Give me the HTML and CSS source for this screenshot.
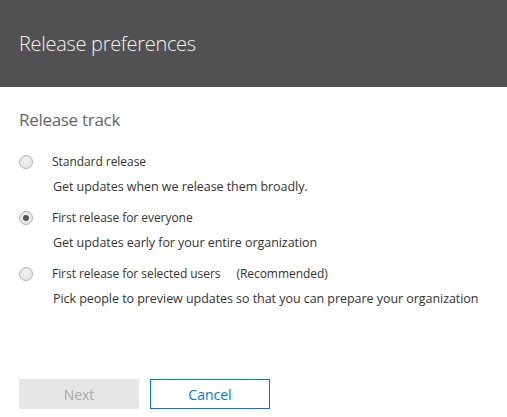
FILE: index.html
```html
<!DOCTYPE html>
<html lang="en">
<head>
<meta charset="utf-8">
<title>Release preferences</title>
<link rel="stylesheet" href="styles.css">
</head>
<body>
<div class="panel">
  <header class="header">
    <h1 class="title">Release preferences</h1>
  </header>
  <main class="content">
    <h2 class="section">Release track</h2>
    <div class="options">
      <div class="option">
        <div class="row"><span class="radio"></span><span class="label">Standard release</span></div>
        <div class="desc">Get updates when we release them broadly.</div>
      </div>
      <div class="option">
        <div class="row"><span class="radio checked"></span><span class="label">First release for everyone</span></div>
        <div class="desc">Get updates early for your entire organization</div>
      </div>
      <div class="option">
        <div class="row"><span class="radio"></span><span class="label">First release for selected users<span class="rec">(Recommended)</span></span></div>
        <div class="desc">Pick people to preview updates so that you can prepare your organization</div>
      </div>
    </div>
    <div class="actions">
      <button class="btn btn-disabled" type="button">Next</button>
      <button class="btn btn-outline" type="button">Cancel</button>
    </div>
  </main>
</div>
</body>
</html>
```
FILE: styles.css
```css
* { box-sizing: border-box; }
html, body { margin: 0; padding: 0; background: #ffffff; }
body {
  font-family: "Open Sans", "Noto Sans", "Liberation Sans", sans-serif;
  color: #333333;
  width: 507px;
  height: 417px;
  overflow: hidden;
}
.header {
  height: 87px;
  background: #515151;
  display: flex;
  align-items: center;
  padding: 0 19px;
}
.title {
  margin: 0;
  font-size: 20px;
  font-weight: 300;
  color: #f2f2f2;
  line-height: 26px;
  letter-spacing: -0.3px;
  padding-top: 1px;
}
.content {
  padding: 21px 19px 0 19px;
}
.section {
  margin: 0;
  font-size: 17px;
  font-weight: 400;
  color: #666666;
  line-height: 24px;
  letter-spacing: -0.3px;
}
.options {
  margin-top: 20px;
  display: flex;
  flex-direction: column;
  gap: 11px;
}
.option {
  display: flex;
  flex-direction: column;
  gap: 5px;
}
.row {
  display: flex;
  align-items: center;
  height: 20px;
}
.radio {
  width: 14px;
  height: 14px;
  border-radius: 50%;
  border: 1px solid #b4b4b4;
  background: radial-gradient(circle at 50% 40%, #f4f4f4 0%, #e4e4e4 70%, #dcdcdc 100%);
  display: flex;
  align-items: center;
  justify-content: center;
  flex: none;
}
.radio.checked::after {
  content: "";
  width: 6px;
  height: 6px;
  border-radius: 50%;
  background: #555555;
}
.label {
  margin-left: 19px;
  font-size: 12px;
  line-height: 20px;
  color: #333333;
  letter-spacing: -0.05px;
}
.rec { margin-left: 16px; }
.desc {
  margin-left: 34px;
  font-size: 12.5px;
  line-height: 20px;
  color: #333333;
  letter-spacing: -0.05px;
  height: 20px;
}
.actions {
  margin-top: 70px;
  display: flex;
  gap: 11px;
}
.btn {
  width: 120px;
  height: 30px;
  font-family: inherit;
  font-size: 14px;
  padding: 0;
  margin: 0;
}
.btn-disabled {
  background: #e6e6e6;
  border: none;
  color: #a6a6a6;
}
.btn-outline {
  background: #ffffff;
  border: 1px solid #0078d7;
  color: #0078d7;
}
```
